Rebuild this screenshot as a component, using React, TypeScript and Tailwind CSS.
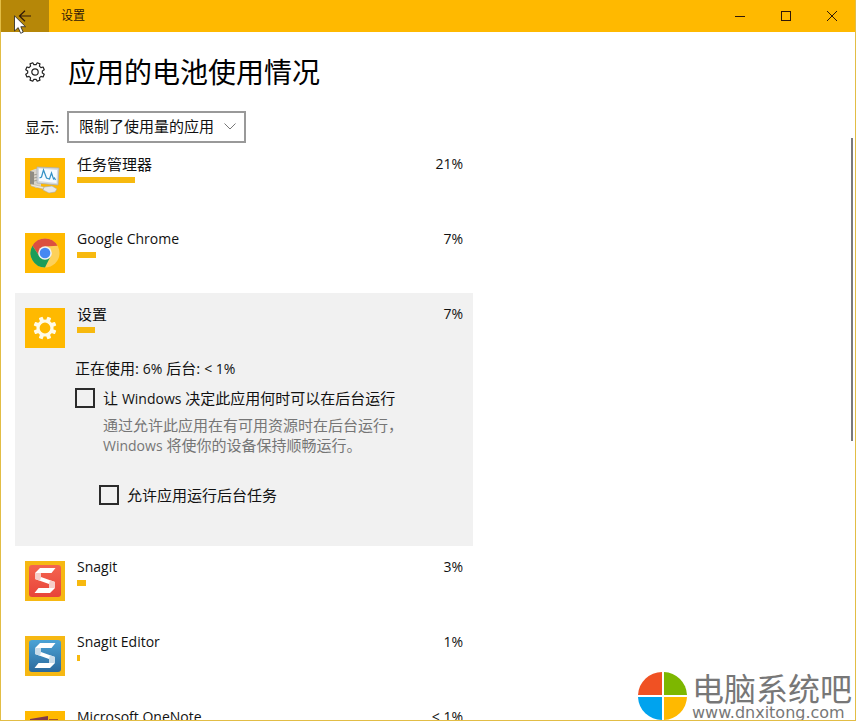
import type { ReactNode } from 'react';

function TaskManagerIcon() {
  return (
    <svg viewBox="0 0 40 40" className="size-10 shrink-0 bg-[#ffb900]" aria-hidden="true">
      <path d="M5 13l5-2 6-1v19l-5 1-6-4z" fill="#d9d5cb" />
      <path d="M5 13l4 1v14l-4-2z" fill="#8f8c83" />
      <path d="M9 17l4-1M9 20l4-1M9 23l4-1" stroke="#a09c92" strokeWidth="1" />
      <path d="M12 9l22 1-1 17-21-2z" fill="#d6dbe0" stroke="#a9aeb3" strokeWidth=".8" />
      <path d="M14 10.500l18 1.500-.5 13-17.500-2z" fill="#f7fbff" />
      <path d="M14.500 20l2-1 2-7 3 8 3 1 2-6 2 6 1-1 1 2" fill="none" stroke="#3290c4" strokeWidth="1.2" />
      <path d="M19 29l8-1 5 3-2 3-6 1-6-3z" fill="#e9e9e6" stroke="#aaa" strokeWidth=".6" />
      <path d="M6 26l13 3-1 2-12-3z" fill="#eee9dc" stroke="#b1aa97" strokeWidth=".5" />
    </svg>
  );
}

function ChromeIcon() {
  return (
    <svg viewBox="0 0 40 40" className="size-10 shrink-0 bg-[#ffb900]" aria-hidden="true">
      <g transform="translate(20 20)">
        <circle r="14.5" fill="#fdd15a" />
        <path d="M-12.56-7.25A14.5 14.5 0 0 1 12.56-7.25L0-6.5L-5.6 3.2z" fill="#dc4f3f" />
        <path d="M-12.56-7.25A14.5 14.5 0 0 0 0 14.5L5.6 3.2L-5.6 3.2z" fill="#1b9d59" />
        <circle r="6.8" fill="#f3f3f3" />
        <circle r="5.3" fill="#4688f2" />
      </g>
    </svg>
  );
}

function GearIcon() {
  const angles = [0, 45, 90, 135, 180, 225, 270, 315];
  return (
    <svg viewBox="0 0 40 40" className="size-10 shrink-0 bg-[#ffb900]" aria-hidden="true">
      {angles.map((a) => (
        <rect key={a} x="18" y="8.5" width="4" height="5" rx=".8" fill="#fffbe9" transform={`rotate(${a + 22.5} 20 20)`} />
      ))}
      <circle cx="20" cy="20" r="7" fill="none" stroke="#fffbe9" strokeWidth="3.2" />
    </svg>
  );
}

function SnagitIcon({ id, from, to, shade }: { id: string; from: string; to: string; shade: string }) {
  return (
    <svg viewBox="0 0 40 40" className="size-10 shrink-0 bg-[#f6b813]" aria-hidden="true">
      <defs>
        <linearGradient id={id} x1="0" y1="0" x2="0" y2="1">
          <stop offset="0" stopColor={from} />
          <stop offset="1" stopColor={to} />
        </linearGradient>
      </defs>
      <rect x="4" y="4" width="32" height="32" rx="3" fill={`url(#${id})`} />
      <path d="M15 7h15.500l-4 5H16v4l14 5v6l-5 5H9.500l4-5H24v-4l-14-5v-6z" fill="#fff" />
      <path d="M10 12l6 0v4l-1 3.800-5-1.800zM30 27h-6v-4l1-3.800 5 1.800z" fill={shade} />
    </svg>
  );
}

function OneNoteIcon() {
  return (
    <svg viewBox="0 0 40 40" className="size-10 shrink-0 bg-[#ffb900]" aria-hidden="true">
      <path d="M5 8l18-3v30L5 32z" fill="#80394b" />
      <path d="M24 8h9v24h-9z" fill="#a5542c" />
    </svg>
  );
}

function SettingsOutline() {
  const teeth = 8;
  const points: string[] = [];
  for (let i = 0; i < teeth; i++) {
    const base = ((i + 0.5) * 360) / teeth;
    const corners: [number, number][] = [[-14, 7.4], [-9, 9.5], [9, 9.5], [14, 7.4]];
    for (const [offset, radius] of corners) {
      const t = ((base + offset) * Math.PI) / 180;
      points.push(`${(10 + radius * Math.sin(t)).toFixed(2)},${(10 - radius * Math.cos(t)).toFixed(2)}`);
    }
  }
  return (
    <svg viewBox="0 0 20 20" className="size-5 shrink-0" fill="none" stroke="#222" strokeWidth="1.2" strokeLinejoin="round" aria-hidden="true">
      <polygon points={points.join(' ')} />
      <circle cx="10" cy="10" r="3.2" />
    </svg>
  );
}

function Latin({ children }: { children: ReactNode }) {
  return <span className="text-sm leading-none">{children}</span>;
}

type AppRowProps = { icon: ReactNode; name: string; latin?: boolean; percent: string; bar: number };

function AppRow({ icon, name, latin, percent, bar }: AppRowProps) {
  return (
    <div className="flex h-[75px] gap-3 px-[10px] pt-[11px]">
      <div className="pt-1">{icon}</div>
      <div className="grow">
        <div className={latin ? 'text-sm leading-5' : 'leading-5'}>{name}</div>
        <div className="mt-[3px] h-[6px] bg-[#f7b90f]" style={{ width: bar }} />
      </div>
      <div className="text-sm leading-5">{percent}</div>
    </div>
  );
}

const checkbox = 'size-5 shrink-0 appearance-none border-2 border-[#2b2b2b] checked:bg-[#ffb900]';

export default function App() {
  return (
    <div className="relative flex h-screen flex-col overflow-hidden border border-t-0 border-[#e2bd45] bg-white font-['Open_Sans','Noto_Sans_CJK_SC',sans-serif] text-[15px] text-[#111]">
      <header className="flex h-8 shrink-0 items-stretch bg-[#ffb900] text-[#301808]">
        <button aria-label="返回" className="flex w-12 items-center justify-center bg-[#b68708]">
          <svg viewBox="0 0 14 12" className="h-3 w-[14px]" fill="none" stroke="currentColor" strokeWidth="1.2" aria-hidden="true">
            <path d="M13 6H1.500M7 .8L1.500 6L7 11.200" />
          </svg>
        </button>
        <div className="grow self-center pl-3 text-xs">设置</div>
        <button aria-label="最小化" className="flex w-[46px] items-center justify-center">
          <svg viewBox="0 0 10 10" className="size-[10px]" stroke="currentColor" aria-hidden="true"><path d="M0 5.500H10" /></svg>
        </button>
        <button aria-label="最大化" className="flex w-[46px] items-center justify-center">
          <svg viewBox="0 0 10 10" className="size-[10px]" fill="none" stroke="currentColor" aria-hidden="true"><rect x=".5" y=".5" width="9" height="9" /></svg>
        </button>
        <button aria-label="关闭" className="flex w-[46px] items-center justify-center">
          <svg viewBox="0 0 10 10" className="size-[10px]" stroke="currentColor" aria-hidden="true"><path d="M0 0L10 10M10 0L0 10" /></svg>
        </button>
      </header>

      <div className="flex h-20 shrink-0 items-center gap-[23px] pl-6">
        <SettingsOutline />
        <h1 className="text-[28px] leading-10 text-black">应用的电池使用情况</h1>
      </div>

      <div className="-mt-px flex h-8 shrink-0 items-center pl-6">
        <label htmlFor="filter" className="w-[42px]">显示:</label>
        <div className="relative">
          <select id="filter" className="block h-8 w-[179px] appearance-none border-2 border-[#999] bg-white pb-[2px] pl-[10px] leading-5">
            <option>限制了使用量的应用</option>
          </select>
          <svg viewBox="0 0 12 7" className="pointer-events-none absolute top-3 right-[10px] h-[7px] w-3" fill="none" stroke="#777" aria-hidden="true">
            <path d="M.5 .5L6 6L11.500 .5" />
          </svg>
        </div>
      </div>

      <main className="min-h-0 grow overflow-hidden pl-[14px]">
        <div className="w-[458px] max-w-full">
          <AppRow icon={<TaskManagerIcon />} name="任务管理器" percent="21%" bar={58} />
          <AppRow icon={<ChromeIcon />} name="Google Chrome" latin percent="7%" bar={19} />
          <section className="h-[253px] bg-[#f1f1f1]">
            <AppRow icon={<GearIcon />} name="设置" percent="7%" bar={18} />
            <div className="-mt-[10px] pl-[60px] leading-5">
              <p>正在使用: <Latin>6%</Latin> 后台: <Latin>&lt; 1%</Latin></p>
              <div className="mt-[10px] flex gap-2">
                <input id="auto" type="checkbox" className={checkbox} />
                <label htmlFor="auto">让 <Latin>Windows</Latin> 决定此应用何时可以在后台运行</label>
              </div>
              <p className="mt-[7px] pl-7 text-[#767676]">
                通过允许此应用在有可用资源时在后台运行，<br /><Latin>Windows</Latin> 将使你的设备保持顺畅运行。
              </p>
              <div className="mt-[30px] flex gap-2 pl-6">
                <input id="tasks" type="checkbox" className={checkbox} />
                <label htmlFor="tasks">允许应用运行后台任务</label>
              </div>
            </div>
          </section>
          <AppRow icon={<SnagitIcon id="red" from="#f4644f" to="#e8443a" shade="#f6cdc8" />} name="Snagit" latin percent="3%" bar={9} />
          <AppRow icon={<SnagitIcon id="blue" from="#4ba3d6" to="#2b699c" shade="#c9dcea" />} name="Snagit Editor" latin percent="1%" bar={3} />
          <AppRow icon={<OneNoteIcon />} name="Microsoft OneNote" latin percent="< 1%" bar={2} />
        </div>
      </main>

      <div className="absolute top-[138px] right-[2px] h-[303px] w-[2px] bg-[#7a7a7a]" />

      <div className="absolute -right-px -bottom-px flex h-[50px] w-[220px] items-center gap-1 bg-white pl-[2px]">
        <svg viewBox="0 0 50 50" className="h-[50px] w-[50px] shrink-0" aria-hidden="true">
          <path d="M24 24H0A24 24 0 0 1 24 1z" fill="#f05123" />
          <path d="M26 24h23A24 24 0 0 0 26 1z" fill="#7db700" />
          <path d="M24 26H0A24 24 0 0 0 24 49z" fill="#00a3ee" />
          <path d="M26 26h23A24 24 0 0 1 26 49z" fill="#ffb900" />
        </svg>
        <div className="text-[#777]">
          <div className="text-[32px] leading-[34px]">电脑系统吧</div>
          <div className="font-['DejaVu_Sans',sans-serif] text-base leading-[14px]">www.dnxitong.com</div>
        </div>
      </div>

      <svg viewBox="0 0 12 19" className="pointer-events-none absolute top-[15px] left-[13px] h-[19px] w-3" aria-hidden="true">
        <path d="M.5 .8V16L4.200 12.600L6.700 18.300L9.200 17.200L6.800 11.700H11.500z" fill="#fff" stroke="#222" strokeWidth=".8" />
      </svg>
    </div>
  );
}
